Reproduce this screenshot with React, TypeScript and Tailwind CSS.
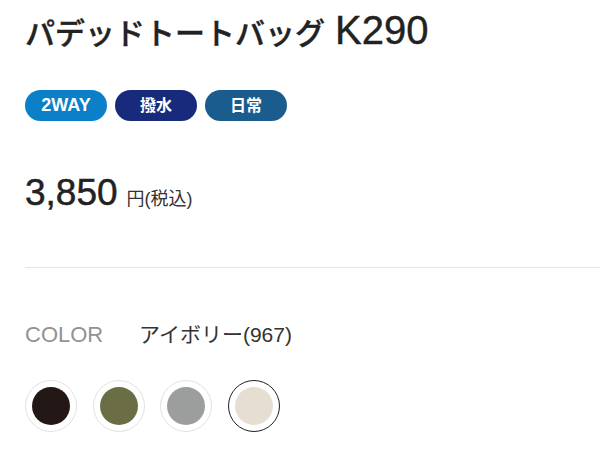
import React from "react";

export default function App() {
  const swatches = [
    { c: "bg-[#231815]", sel: false },
    { c: "bg-[#6b6d45]", sel: false },
    { c: "bg-[#9c9d9d]", sel: false },
    { c: "bg-[#e6dfd1]", sel: true },
  ];
  return (
    <div className="w-[600px] h-[450px] bg-white overflow-hidden pl-[25px] font-['Liberation_Sans','Noto_Sans_CJK_JP',sans-serif] text-[#222]">
      <h1 className="pt-[10px] h-[50px] flex items-baseline text-[30px] leading-[40px] font-medium">
        <span className="[-webkit-text-stroke:0.4px_#222]">パデッドトートバッグ</span>
        <span className="ml-[10px] text-[40px] font-normal [-webkit-text-stroke:0.4px_#222]">K290</span>
      </h1>
      <div className="mt-[40px] flex gap-[8px]">
        <span className="w-[82px] h-[31px] rounded-full bg-[#0b7fc7] text-white text-[18px] font-bold flex items-center justify-center">2WAY</span>
        <span className="w-[82px] h-[31px] rounded-full bg-[#172a7b] text-white text-[16px] font-bold flex items-center justify-center">撥水</span>
        <span className="w-[82px] h-[31px] rounded-full bg-[#1a5c8d] text-white text-[16px] font-bold flex items-center justify-center">日常</span>
      </div>
      <div className="mt-[52px] flex items-baseline">
        <span className="text-[37px] leading-[40px] font-normal [-webkit-text-stroke:0.5px_#222]">3,850</span>
        <span className="ml-[9px] text-[18px] text-[#333]">円(税込)</span>
      </div>
      <div className="mt-[54px] h-px bg-[#e5e5e5]" />
      <div className="mt-[53px] flex items-center text-[21px] leading-[28px]">
        <span className="text-[#929292] text-[22px] w-[114px]">COLOR</span>
        <span className="text-[#333]">アイボリー(967)</span>
      </div>
      <div className="mt-[31px] flex gap-[15.5px]">
        {swatches.map((s, i) => (
          <div
            key={i}
            className={`w-[52px] h-[52px] rounded-full flex items-center justify-center ${s.sel ? "border border-[#222]" : "border border-[#e2e2e2]"}`}
          >
            <div className={`w-[38px] h-[38px] rounded-full ${s.c}`} />
          </div>
        ))}
      </div>
    </div>
  );
}
